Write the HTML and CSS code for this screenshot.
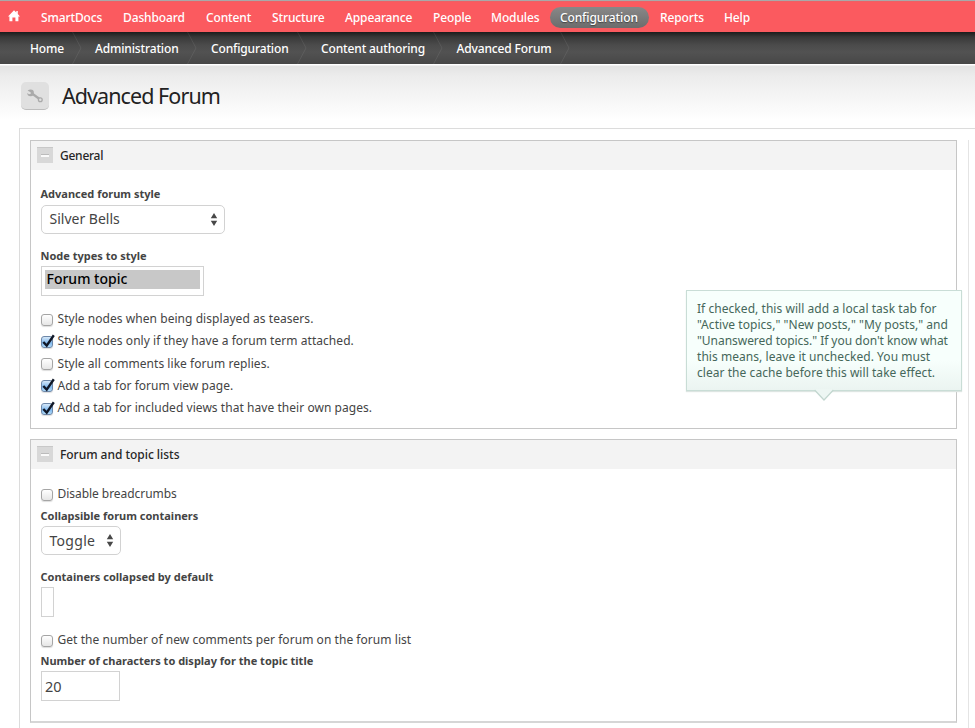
FILE: index.html
```html
<!DOCTYPE html>
<html lang="en">
<head>
<meta charset="utf-8">
<title>Advanced Forum</title>
<link rel="stylesheet" href="styles.css">
</head>
<body>
<nav class="toolbar">
  <a class="home"><svg width="12" height="12" viewBox="0 0 12 12"><path d="M6 .2 0 6.4h1.4V11.3h3V7.6h3v3.7h3V6.4H12L9.8 4.1V1H8.3v1.6z" fill="#fff"/></svg></a>
  <a>SmartDocs</a>
  <a>Dashboard</a>
  <a>Content</a>
  <a>Structure</a>
  <a>Appearance</a>
  <a>People</a>
  <a>Modules</a>
  <a><span class="active">Configuration</span></a>
  <a>Reports</a>
  <a>Help</a>
</nav>
<nav class="crumbs">
  <a>Home<svg class="sep" width="10" height="32" viewBox="0 0 10 32"><path d="M.5 0 9 16 .5 32"/></svg></a>
  <a>Administration<svg class="sep" width="10" height="32" viewBox="0 0 10 32"><path d="M.5 0 9 16 .5 32"/></svg></a>
  <a>Configuration<svg class="sep" width="10" height="32" viewBox="0 0 10 32"><path d="M.5 0 9 16 .5 32"/></svg></a>
  <a>Content authoring<svg class="sep" width="10" height="32" viewBox="0 0 10 32"><path d="M.5 0 9 16 .5 32"/></svg></a>
  <a>Advanced Forum<svg class="sep" width="10" height="32" viewBox="0 0 10 32"><path d="M.5 0 9 16 .5 32"/></svg></a>
</nav>
<header class="title">
  <span class="wrench"><svg width="18" height="16" viewBox="0 0 18 16"><path d="M3.4 3.6 14.6 11.8" stroke="#aaa" stroke-width="2.4"/><circle cx="4.6" cy="4.9" r="3.3" fill="#aaa"/><path d="M0 1.8 4.6 4.2 4.8 5.8 3 6.2-.5 3.8z" fill="#e0e0e0"/><circle cx="14.3" cy="11.7" r="1.9" fill="#e0e0e0" stroke="#aaa" stroke-width="1.3"/></svg></span>
  <h1>Advanced Forum</h1>
</header>
<main class="content">
  <div class="panels">
    <section class="fieldset first">
      <h2><span class="toggle"></span>General</h2>
      <div class="body">
        <label class="label">Advanced forum style</label>
        <div class="select wide">Silver Bells<svg width="8" height="13" viewBox="0 0 8 13"><path d="M4 0 7.2 5.3H.8zM.8 7.7h6.4L4 13z" fill="#484848"/></svg></div>
        <label class="label gap">Node types to style</label>
        <div class="list"><div class="option">Forum topic</div></div>
        <div class="checks">
          <div class="row"><span class="cb"></span>Style nodes when being displayed as teasers.</div>
          <div class="row"><span class="cb on"><svg width="15" height="15" viewBox="0 0 15 15"><path d="M2.3 8 5.7 11.6 12.8 1.2" /></svg></span>Style nodes only if they have a forum term attached.</div>
          <div class="row"><span class="cb"></span>Style all comments like forum replies.</div>
          <div class="row"><span class="cb on"><svg width="15" height="15" viewBox="0 0 15 15"><path d="M2.3 8 5.7 11.6 12.8 1.2" /></svg></span>Add a tab for forum view page.</div>
          <div class="row"><span class="cb on"><svg width="15" height="15" viewBox="0 0 15 15"><path d="M2.3 8 5.7 11.6 12.8 1.2" /></svg></span>Add a tab for included views that have their own pages.</div>
        </div>
      </div>
      <aside class="tip">If checked, this will add a local task tab for<br>"Active topics," "New posts," "My posts," and<br><span class="tight">"Unanswered topics." If you don't know what</span><br>this means, leave it unchecked. You must<br>clear the cache before this will take effect.<svg class="arrow" width="20" height="12" viewBox="0 0 20 12"><path d="M0 0h20v1h-.6L10 11 .6 1H0z" fill="#edf6f3"/><path d="M.6 1 10 11 19.4 1" fill="none" stroke="#c2d6cf" stroke-width="1.2"/></svg></aside>
    </section>
    <section class="fieldset second">
      <h2><span class="toggle"></span>Forum and topic lists</h2>
      <div class="body">
        <div class="row"><span class="cb"></span><span class="snug">Disable breadcrumbs</span></div>
        <label class="label">Collapsible forum containers</label>
        <div class="select narrow">Toggle<svg width="8" height="13" viewBox="0 0 8 13"><path d="M4 0 7.2 5.3H.8zM.8 7.7h6.4L4 13z" fill="#484848"/></svg></div>
        <label class="label gap">Containers collapsed by default</label>
        <div class="empty"></div>
        <div class="row"><span class="cb"></span>Get the number of new comments per forum on the forum list</div>
        <label class="label last">Number of characters to display for the topic title</label>
        <div class="input">20</div>
      </div>
    </section>
  </div>
</main>
</body>
</html>
```
FILE: styles.css
```css
* { box-sizing: border-box; }
body {
  margin: 0;
  height: 728px;
  overflow: hidden;
  background: #fff;
  font: 12px/16px "Noto Sans", "Open Sans", sans-serif;
  color: #444;
}
.toolbar {
  display: grid;
  grid-template-columns: 33px 82px 83px 66px 73px 88px 58px 69px 100px 64px 60px;
  height: 32px;
  padding-left: 8px;
  border-top: 1px solid #a9a9a9;
  background: linear-gradient(#e0666b, #fb5a5f 1px);
  color: #fff;
  font-weight: 500;
  letter-spacing: -.12px;
  line-height: 33px;
  white-space: nowrap;
}
.home svg { display: block; margin-top: 9px; }
.active {
  display: block;
  width: 99px;
  height: 21px;
  margin: 6px 0 0 -10px;
  padding-left: 10px;
  border-radius: 11px;
  background: linear-gradient(#888, #6c6c6c);
  line-height: 21px;
  text-shadow: 0 1px 1px #444;
}
.crumbs {
  display: grid;
  grid-template-columns: 65px 116px 110px 135.5px 130px;
  height: 32px;
  padding-left: 30px;
  background: linear-gradient(#1c1c1c, #383838 5px, #4b4b4b 13px, #525252 20px, #474747);
  color: #fff;
  font-weight: 500;
  letter-spacing: -.14px;
  line-height: 33px;
  white-space: nowrap;
}
.crumbs a { display: flex; }
.sep { margin-left: 8px; fill: none; stroke: #fff; stroke-opacity: .08; }
.title {
  display: flex;
  align-items: flex-start;
  height: 64px;
  padding: 18px 0 0 21px;
  background: linear-gradient(#fff 1px, #e3e3e3 2px, #ececec 12px, #fff 56px);
}
.wrench {
  display: grid;
  place-items: center;
  width: 28px;
  height: 28px;
  border-radius: 5px;
  background: #e0e0e0;
  border-bottom: 1px solid #bdbdbd;
}
h1 {
  margin: 0 0 0 13px;
  color: #222;
  font-size: 21.5px;
  font-weight: 400;
  line-height: 27px;
  letter-spacing: -.93px;
}
.content {
  height: 600px;
  margin-left: 19px;
  padding: 11px 6px 0 10px;
  border-top: 1px solid #dcdcdc;
  border-left: 1px solid #dcdcdc;
}
.panels {
  height: 588px;
  padding-right: 10px;
  border-right: 1px solid #e4e4e4;
}
.fieldset {
  position: relative;
  border: 1px solid #c6c6c6;
  width: 927px;
}
.first { height: 289px; }
.second { height: 284px; margin-top: 10px; border-bottom: 2px solid #d6d6d6; }
h2 {
  display: flex;
  align-items: center;
  height: 29px;
  margin: 0;
  padding-left: 6px;
  background: #f3f3f3;
  color: #262626;
  font-size: 12px;
  font-weight: 500;
  letter-spacing: -.03px;
}
.first h2 { letter-spacing: -.25px; }
.toggle {
  width: 16px;
  height: 16px;
  margin: -1px 7px 0 0;
  border-top: 1px solid #c8c8c8;
  background: linear-gradient(#bbb, #bbb) 4px 6px / 8px 1px no-repeat,
    linear-gradient(#fafafa, #fafafa) 4px 7px / 8px 2px no-repeat, #d8d8d8;
}
.body { padding: 14px 0 0 9.5px; }
.first .body { padding-top: 13px; }
.label {
  display: block;
  height: 21px;
  color: #444;
  font-size: 11px;
  font-weight: 700;
  line-height: 21px;
}
.first .label:first-child { height: 22px; }
.gap { margin-top: 11px; }
.select {
  display: flex;
  align-items: center;
  justify-content: space-between;
  height: 29px;
  padding: 0 6px 1px 8px;
  border: 1px solid #d2d2d2;
  border-radius: 5px;
  color: #444;
  font-size: 14px;
}
.wide { width: 184.5px; }
.narrow { width: 80.5px; padding-bottom: 0; letter-spacing: .3px; }
.list {
  width: 163.5px;
  height: 30px;
  padding: 3px;
  border: 1px solid #d2d2d2;
}
.option {
  height: 19px;
  padding-left: 2px;
  background: #c8c8c8;
  color: #000;
  font-size: 14px;
  font-weight: 500;
  line-height: 18px;
}
.checks { margin-top: 12px; }
.row {
  display: flex;
  align-items: center;
  height: 22.25px;
  letter-spacing: .05px;
}
.snug { letter-spacing: -.05px; }
.second .row { height: 22px; }
.cb {
  position: relative;
  width: 12px;
  height: 12px;
  margin: 1px 5px 0 0;
  border: 1px solid #a5a5a5;
  border-radius: 3px;
  background: linear-gradient(#fff, #e6e6e6);
  box-shadow: 0 1px 1px #ddd;
}
.on { border-color: #6d87a8; background: linear-gradient(#d6e8f8, #7fb8ee 60%, #b2dcfa); }
.on svg {
  position: absolute;
  left: -1px;
  top: -3px;
  fill: none;
  stroke: #101828;
  stroke-width: 2.4;
}
.empty { width: 13px; height: 30px; margin-bottom: 12px; border: 1px solid #d2d2d2; }
.last { height: 20px; line-height: 20px; }
.input {
  width: 79.5px;
  height: 30px;
  padding-left: 3.5px;
  border: 1px solid #d2d2d2;
  font-size: 14.5px;
  line-height: 28px;
}
.tip {
  position: absolute;
  left: 655px;
  top: 149px;
  width: 276px;
  height: 101px;
  padding: 10px 0 0 10px;
  border: 1px solid #c9ddd6;
  background: linear-gradient(#f7fffc 70%, #ebf4f1);
  box-shadow: 0 1px 1px #dde5e2;
  color: #45675a;
  letter-spacing: .05px;
  white-space: nowrap;
}
.tight { letter-spacing: -.04px; }
.arrow { position: absolute; left: 127px; top: 98px; }
```
